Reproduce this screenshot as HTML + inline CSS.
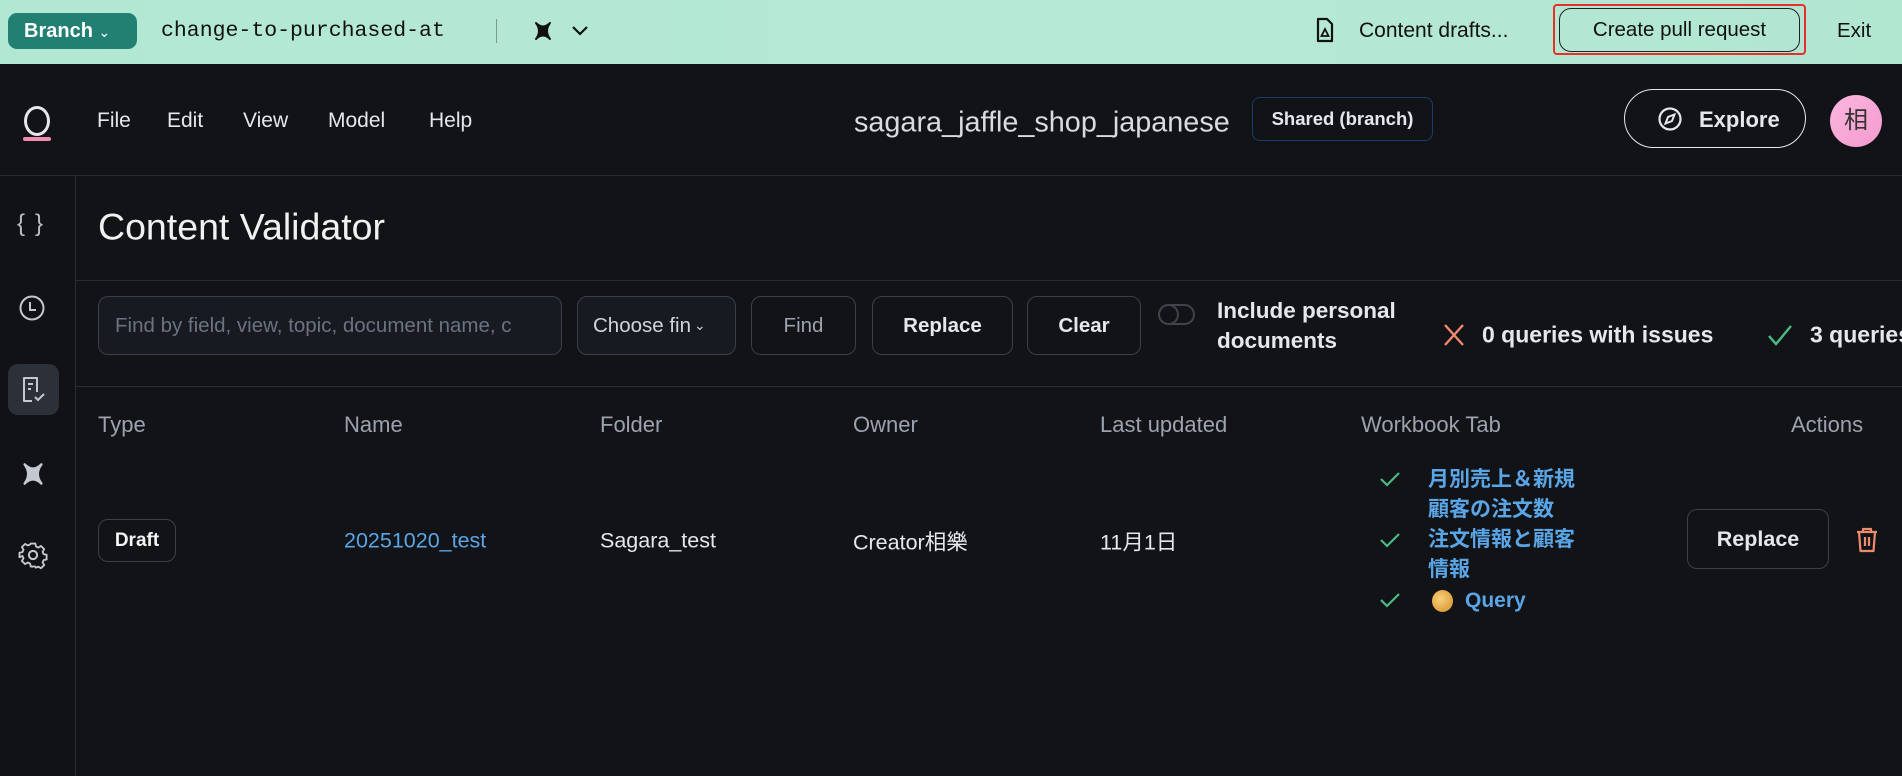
<!DOCTYPE html>
<html><head><meta charset="utf-8"><style>
*{box-sizing:border-box;margin:0;padding:0}
body{width:1902px;height:776px;overflow:hidden;background:#111317;font-family:"Liberation Sans","Noto Sans CJK JP",sans-serif;color:#e5e7eb;position:relative}
.a{position:absolute;white-space:nowrap}
.top{position:absolute;left:0;top:0;width:1902px;height:64px;background:linear-gradient(90deg,#b2e8d3,#b6e9d6 60%,#b1e6d1)}
.btn{position:absolute;border:1px solid #3a3f48;border-radius:10px;display:flex;align-items:center;justify-content:center;font-size:20px}
.mid{transform:translateY(-50%)}
.blue{color:#5aa5e6}
.h{font-size:22px;color:#9ca3af}
</style></head><body>
<div class="top"></div>
<div class="a" style="left:8px;top:13px;width:129px;height:36px;background:#228073;border-radius:9px;color:#fff;font-weight:bold;font-size:20px;line-height:36px;padding-left:16px">Branch <span style="font-size:14px;font-weight:normal">&#8964;</span></div>
<div class="a mid" style="left:161px;top:31px;font-family:'Liberation Mono',monospace;font-size:21.5px;color:#111">change-to-purchased-at</div>
<div class="a" style="left:496px;top:19px;width:1px;height:24px;background:#7a9a8e"></div>
<svg class="a" style="left:533px;top:21px" width="20" height="20" viewBox="0 0 20 20"><path d="M3 2 Q10 9 17 2 Q11 10 17 18 Q10 11 3 18 Q9 10 3 2Z" fill="#111" stroke="#111" stroke-width="2" stroke-linejoin="round"/></svg>
<svg class="a" style="left:571px;top:24px" width="18" height="14" viewBox="0 0 18 14"><path d="M2 3 L9 10 L16 3" fill="none" stroke="#111" stroke-width="2.2"/></svg>
<svg class="a" style="left:1316px;top:17px" width="18" height="26" viewBox="0 0 18 26"><path d="M2 2 H11 L16 7 V24 H2 Z" fill="none" stroke="#111" stroke-width="2.2" stroke-linejoin="round"/><path d="M9 12 L12.5 19 H5.5 Z" fill="none" stroke="#111" stroke-width="1.8"/></svg>
<div class="a mid" style="left:1359px;top:31px;font-size:21px;color:#111">Content drafts...</div>
<div class="a" style="left:1553px;top:4px;width:253px;height:51px;border:2px solid #e8302b;border-radius:4px"></div>
<div class="a" style="left:1559px;top:8px;width:241px;height:44px;border:1.5px solid #222;border-radius:12px;color:#111;font-size:20.5px;line-height:41px;text-align:center">Create pull request</div>
<div class="a mid" style="left:1837px;top:31px;font-size:20.5px;color:#111">Exit</div>

<div class="a" style="left:0;top:175px;width:1902px;height:1px;background:#2a2e36"></div>
<div class="a" style="left:24px;top:106px;width:26px;height:30px;border:3px solid #e5e7eb;border-radius:50%"></div>
<div class="a" style="left:23px;top:137px;width:28px;height:4px;background:#f28bb0;border-radius:2px"></div>
<div class="a mid" style="left:97px;top:121px;font-size:21px">File</div>
<div class="a mid" style="left:167px;top:121px;font-size:21px">Edit</div>
<div class="a mid" style="left:243px;top:121px;font-size:21px">View</div>
<div class="a mid" style="left:328px;top:121px;font-size:21px">Model</div>
<div class="a mid" style="left:429px;top:121px;font-size:21px">Help</div>
<div class="a mid" style="left:854px;top:123px;font-size:28.8px;color:#d8dbe0">sagara_jaffle_shop_japanese</div>
<div class="a" style="left:1252px;top:97px;width:181px;height:44px;border:1px solid #1e3a6a;border-radius:8px;font-weight:bold;font-size:18.5px;line-height:42px;text-align:center">Shared (branch)</div>
<div class="a" style="left:1624px;top:89px;width:182px;height:59px;border:1.5px solid #e5e7eb;border-radius:30px"></div>
<svg class="a" style="left:1657px;top:106px" width="26" height="26" viewBox="0 0 26 26"><circle cx="13" cy="13" r="10.5" fill="none" stroke="#e5e7eb" stroke-width="2.2"/><path d="M17.5 8.5 L15 15 L8.5 17.5 L11 11 Z" fill="none" stroke="#e5e7eb" stroke-width="2"/></svg>
<div class="a mid" style="left:1699px;top:120px;font-size:22px;font-weight:bold">Explore</div>
<div class="a" style="left:1830px;top:95px;width:52px;height:52px;border-radius:50%;background:linear-gradient(135deg,#fbb7dd,#f39ad0);color:#333;font-size:24px;line-height:52px;text-align:center">相</div>

<div class="a" style="left:0;top:176px;width:75px;height:600px;background:#101216"></div>
<div class="a" style="left:75px;top:176px;width:1px;height:600px;background:#2a2e36"></div>
<div class="a mid" style="left:17px;top:224px;font-size:24px;color:#b8bcc4;letter-spacing:4px">{&#8202;}</div>
<svg class="a" style="left:18px;top:294px" width="28" height="28" viewBox="0 0 28 28"><circle cx="14" cy="14" r="11.5" fill="none" stroke="#c4c8cf" stroke-width="2"/><path d="M12 8 V16 H18" fill="none" stroke="#c4c8cf" stroke-width="2"/></svg>
<div class="a" style="left:8px;top:364px;width:51px;height:51px;background:#2c3038;border-radius:10px"></div>
<svg class="a" style="left:20px;top:375px" width="28" height="30" viewBox="0 0 28 30"><path d="M12 26 H4 V3 H17 V17" fill="none" stroke="#c4c8cf" stroke-width="2" stroke-linejoin="round"/><path d="M8 9 H13 M8 14 H11" stroke="#c4c8cf" stroke-width="2"/><path d="M15 22 L18 25 L24 19" fill="none" stroke="#c4c8cf" stroke-width="2"/></svg>
<svg class="a" style="left:21px;top:462px" width="24" height="24" viewBox="0 0 20 20"><path d="M3 2 Q10 9 17 2 Q11 10 17 18 Q10 11 3 18 Q9 10 3 2Z" fill="#c4c8cf" stroke="#c4c8cf" stroke-width="2" stroke-linejoin="round"/></svg>
<svg class="a" style="left:18px;top:540px" width="30" height="30" viewBox="0 0 24 24"><path d="M10 2h4l.6 2.6 2 .9 2.3-1.4 2.8 2.8-1.4 2.3.9 2 2.6.6v4l-2.6.6-.9 2 1.4 2.3-2.8 2.8-2.3-1.4-2 .9L14 22h-4l-.6-2.6-2-.9-2.3 1.4-2.8-2.8 1.4-2.3-.9-2L.2 14v-4l2.6-.6.9-2-1.4-2.3 2.8-2.8 2.3 1.4 2-.9Z" fill="none" stroke="#c4c8cf" stroke-width="1.6" stroke-linejoin="round" transform="translate(1 1) scale(.92)"/><circle cx="12" cy="12" r="3.3" fill="none" stroke="#c4c8cf" stroke-width="1.6"/></svg>

<div class="a mid" style="left:98px;top:227px;font-size:37.5px;color:#f0f1f3">Content Validator</div>
<div class="a" style="left:76px;top:280px;width:1826px;height:1px;background:#2a2e36"></div>
<div class="btn" style="left:98px;top:296px;width:464px;height:59px;background:#171a21;justify-content:flex-start;padding-left:16px;color:#6b7280;font-size:20.5px;overflow:hidden">Find by field, view, topic, document name, c</div>
<div class="btn" style="left:577px;top:296px;width:159px;height:59px;background:#171a21;justify-content:flex-start;padding-left:15px;color:#d1d5db;font-size:20.5px">Choose fin<span style="font-size:14px;margin-left:3px">&#8964;</span></div>
<div class="btn" style="left:751px;top:296px;width:105px;height:59px;color:#9ca3af;font-size:20.5px">Find</div>
<div class="btn" style="left:872px;top:296px;width:141px;height:59px;font-weight:bold;font-size:20.5px">Replace</div>
<div class="btn" style="left:1027px;top:296px;width:114px;height:59px;font-weight:bold;font-size:20.5px">Clear</div>
<div class="a" style="left:1158px;top:304px;width:37px;height:21px;border:2px solid #3f444d;border-radius:11px"></div>
<div class="a" style="left:1158px;top:304px;width:21px;height:21px;border:2px solid #3f444d;border-radius:50%"></div>
<div class="a" style="left:1217px;top:296px;font-size:22.5px;font-weight:bold;line-height:30px">Include personal<br>documents</div>
<svg class="a" style="left:1442px;top:322px" width="24" height="26" viewBox="0 0 24 26"><path d="M3 3 L21 23 M21 3 L3 23" stroke="#f08a6e" stroke-width="2.4"/></svg>
<div class="a mid" style="left:1482px;top:335px;font-size:23px;font-weight:bold">0 queries with issues</div>
<svg class="a" style="left:1766px;top:322px" width="28" height="26" viewBox="0 0 28 26"><path d="M3 14 L10 22 L25 4" fill="none" stroke="#4cba85" stroke-width="2.4"/></svg>
<div class="a mid" style="left:1810px;top:335px;font-size:23px;font-weight:bold">3 queries</div>
<div class="a" style="left:76px;top:386px;width:1826px;height:1px;background:#2a2e36"></div>

<div class="a mid h" style="left:98px;top:425px">Type</div>
<div class="a mid h" style="left:344px;top:425px">Name</div>
<div class="a mid h" style="left:600px;top:425px">Folder</div>
<div class="a mid h" style="left:853px;top:425px">Owner</div>
<div class="a mid h" style="left:1100px;top:425px">Last updated</div>
<div class="a mid h" style="left:1361px;top:425px">Workbook Tab</div>
<div class="a mid h" style="left:1791px;top:425px">Actions</div>

<div class="btn" style="left:98px;top:519px;width:78px;height:43px;font-size:19px;font-weight:bold;color:#f3f4f6">Draft</div>
<div class="a mid blue" style="left:344px;top:541px;font-size:21.5px">20251020_test</div>
<div class="a mid" style="left:600px;top:541px;font-size:21.5px">Sagara_test</div>
<div class="a mid" style="left:853px;top:541px;font-size:21.5px">Creator相樂</div>
<div class="a mid" style="left:1100px;top:541px;font-size:21.5px">11月1日</div>

<svg class="a" style="left:1379px;top:470px" width="22" height="18" viewBox="0 0 22 18"><path d="M2 9 L8 15 L20 3" fill="none" stroke="#4cba85" stroke-width="2.2"/></svg>
<svg class="a" style="left:1379px;top:531px" width="22" height="18" viewBox="0 0 22 18"><path d="M2 9 L8 15 L20 3" fill="none" stroke="#4cba85" stroke-width="2.2"/></svg>
<svg class="a" style="left:1379px;top:591px" width="22" height="18" viewBox="0 0 22 18"><path d="M2 9 L8 15 L20 3" fill="none" stroke="#4cba85" stroke-width="2.2"/></svg>
<div class="a blue" style="left:1428px;top:465px;font-size:21px;font-weight:bold;line-height:30px">月別売上＆新規<br>顧客の注文数<br>注文情報と顧客<br>情報</div>
<div class="a" style="left:1432px;top:590px;width:21px;height:22px;border-radius:50%;background:radial-gradient(circle at 40% 40%,#f6d27a,#e0a040 70%,#c07a30)"></div>
<div class="a mid blue" style="left:1465px;top:601px;font-size:21px;font-weight:bold">Query</div>

<div class="btn" style="left:1687px;top:509px;width:142px;height:60px;font-weight:bold;font-size:21.5px">Replace</div>
<svg class="a" style="left:1855px;top:526px" width="24" height="28" viewBox="0 0 24 28"><path d="M2 6 H22 M8 6 V3 H16 V6 M4 6 L5.5 25 H18.5 L20 6 M10 11 V20 M14 11 V20" fill="none" stroke="#f08a6e" stroke-width="2.2" stroke-linejoin="round"/></svg>
</body></html>
